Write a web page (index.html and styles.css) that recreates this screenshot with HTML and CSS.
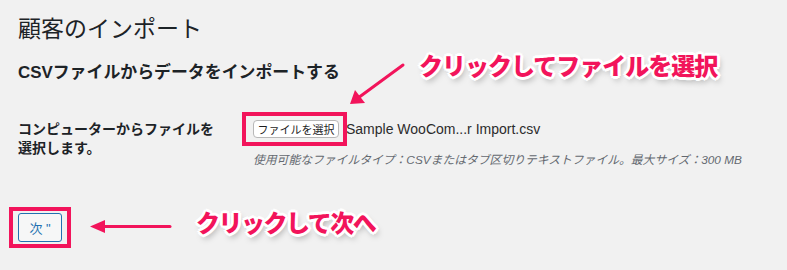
FILE: index.html
```html
<!DOCTYPE html>
<html lang="ja">
<head>
<meta charset="utf-8">
<title>顧客のインポート</title>
<link rel="stylesheet" href="styles.css">
</head>
<body>
<div class="page">
  <div class="wrap">
    <h1 class="title">顧客のインポート</h1>
    <h2 class="subtitle">CSVファイルからデータをインポートする</h2>
    <div class="form-row">
      <div class="label">コンピューターからファイルを<br>選択します。</div>
      <div class="field">
        <div class="file-line">
          <span class="file-btn">ファイルを選択</span>
          <span class="file-name">Sample WooCom...r Import.csv</span>
        </div>
        <p class="desc">使用可能なファイルタイプ：CSVまたはタブ区切りテキストファイル。最大サイズ：300 MB</p>
      </div>
    </div>
    <div class="actions">
      <span class="next-btn">次 "</span>
    </div>
  </div>

  <span class="hl hl-file"></span>
  <span class="hl hl-next"></span>
  <svg class="arrows" width="787" height="270" viewBox="0 0 787 270" aria-hidden="true">
    <line x1="403" y1="65" x2="358" y2="98" stroke="#f2145b" stroke-width="3" stroke-linecap="round"/>
    <polygon points="350,104 355,90 365,103" fill="#f2145b"/>
    <line x1="170" y1="226.5" x2="100" y2="226.5" stroke="#f2145b" stroke-width="3" stroke-linecap="round"/>
    <polygon points="90,226.5 105,220 105,233" fill="#f2145b"/>
  </svg>
  <span class="note note-file">クリックしてファイルを選択</span>
  <span class="note note-next">クリックして次へ</span>
</div>
</body>
</html>
```

FILE: styles.css
```css
html, body {
  margin: 0;
  padding: 0;
  background: #f1f1f1;
}
body {
  font-family: "Liberation Sans", "Noto Sans CJK JP", sans-serif;
  color: #1d2327;
}
.page {
  position: relative;
  width: 787px;
  height: 270px;
  overflow: hidden;
}
.wrap {
  padding: 14px 18px 0;
}
.title {
  margin: 0;
  font-size: 23px;
  font-weight: 400;
  line-height: 30px;
  color: #1d2327;
}
.subtitle {
  margin: 18px 0 0;
  font-size: 16.9px;
  font-weight: 700;
  line-height: 22px;
  color: #1d2327;
}
.form-row {
  display: flex;
  margin-top: 36px;
}
.label {
  width: 235px;
  flex: none;
  font-size: 14px;
  font-weight: 700;
  line-height: 19px;
}
.field {
  display: flex;
  flex-direction: column;
}
.file-line {
  display: flex;
  align-items: center;
  gap: 7px;
  height: 18px;
}
.file-btn {
  box-sizing: border-box;
  height: 18px;
  width: 86px;
  display: inline-flex;
  align-items: center;
  justify-content: center;
  background: #fff;
  border: 1px solid #b8b8b8;
  border-radius: 4px;
  font-size: 11px;
  color: #1d1d1d;
}
.file-name {
  font-size: 14px;
  color: #2c2c2c;
}
.desc {
  margin: 14px 0 0;
  font-size: 11.8px;
  line-height: 16px;
  font-style: italic;
  color: #646970;
}
.actions {
  margin-top: 45px;
}
.next-btn {
  box-sizing: border-box;
  display: inline-flex;
  align-items: center;
  justify-content: center;
  width: 44px;
  height: 29px;
  background: #f6f7f7;
  border: 1px solid #2271b1;
  border-radius: 3px;
  color: #2271b1;
  font-size: 13px;
}
.hl {
  position: absolute;
  box-sizing: border-box;
  border: 4px solid #f2145b;
}
.hl-file {
  left: 242px;
  top: 112px;
  width: 105px;
  height: 34px;
}
.hl-next {
  left: 9px;
  top: 207px;
  width: 62px;
  height: 41px;
}
.arrows {
  position: absolute;
  left: 0;
  top: 0;
  pointer-events: none;
}
.note {
  position: absolute;
  font-family: "Noto Sans CJK JP", sans-serif;
  font-weight: 900;
  font-size: 24px;
  line-height: 30px;
  letter-spacing: -1px;
  color: #f2145b;
  white-space: nowrap;
  text-shadow:
    2px 0 0 #fff, -2px 0 0 #fff, 0 2px 0 #fff, 0 -2px 0 #fff,
    2px 2px 0 #fff, -2px -2px 0 #fff, 2px -2px 0 #fff, -2px 2px 0 #fff,
    3px 0 0 #fff, -3px 0 0 #fff, 0 3px 0 #fff, 0 -3px 0 #fff,
    2px 4px 6px rgba(0, 0, 0, 0.35);
}
.note-file {
  left: 419px;
  top: 50px;
}
.note-next {
  left: 196px;
  top: 207px;
  letter-spacing: -1.5px;
}
```
